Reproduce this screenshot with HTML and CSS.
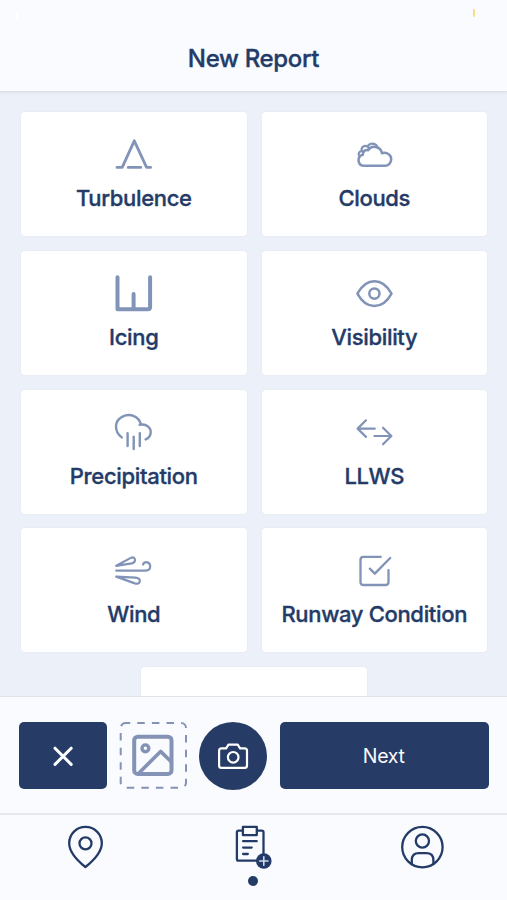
FILE: index.html
```html
<!DOCTYPE html>
<html lang="en">
<head>
<meta charset="utf-8">
<title>New Report</title>
<link rel="stylesheet" href="styles.css">
</head>
<body>
<div class="app">
  <header class="header">
    <div class="status"><i class="signal"></i><i class="battery"></i></div>
    <h1 class="title">New Report</h1>
  </header>
  <main class="content">
    <div class="grid">
      <button class="card"><svg class="icon" viewBox="114 134 40 40"><path d="M117 167.4h5.2L134.3 140.8 146.6 167.4h4M128.2 167.4h12.6" stroke-width="2.8"/></svg><span class="label">Turbulence</span></button>
      <button class="card"><svg class="icon" viewBox="354 134 40 40"><path d="M363.5 165.8A5.6 5.6 0 0 1 362.8 154.8C362.4 151.5 365.2 149.4 368 150.2C371.5 144.8 380.5 146.2 382 153.2C387.5 151.8 391.2 155.2 391.2 159.2C391.2 162.8 388.5 165.8 385 165.8Z"/><path d="M359.6 156.6C357.8 154.4 358.6 151.4 361.8 150.8C360.6 147.4 364.6 144.6 367.6 146.6C369.4 142.6 375.4 142.6 377.2 146.6M361.8 150.8l2.4 .8M367.6 146.6l1.8 2.2" stroke-width="2.2"/></svg><span class="label">Clouds</span></button>
      <button class="card"><svg class="icon" viewBox="114 273 40 40"><path d="M117.5 277.2v32h30.4q2.2 0 2.2-2.2v-29.8M133.6 294v15" stroke-width="4"/></svg><span class="label">Icing</span></button>
      <button class="card"><svg class="icon" viewBox="354 273 40 40"><path d="M357.4 293.6C361.5 286 367 281.2 374.4 281.2S387.4 286 391.5 293.6C387.4 301.2 381.8 306 374.4 306S361.5 301.2 357.4 293.6Z"/><circle cx="374.4" cy="293.6" r="5.1"/></svg><span class="label">Visibility</span></button>
      <button class="card"><svg class="icon" viewBox="114 412 40 40"><path d="M121.8 437.4C113.5 431 114.5 420.5 122.5 416.6C130.2 412.8 139 416.5 141 424.6C147 423.9 150.9 428 150.7 432.4C150.6 436 148.8 438.2 145.6 439.4M141 424.6l-1.3.3M127.6 433.2v12.8M133.7 436.6v12.4M139.8 433.2v12.8" stroke-width="2.4"/></svg><span class="label">Precipitation</span></button>
      <button class="card"><svg class="icon" viewBox="354 412 40 40"><path d="M374.8 428.6H357.8M366 420.3l-8.4 8.3 8.4 8.3M374.4 436H391.2M383 427.7l8.4 8.3-8.4 8.3" stroke-width="2.2"/></svg><span class="label">LLWS</span></button>
      <button class="card"><svg class="icon" viewBox="114 550.4 40 40"><path d="M116.2 566.2L130.8 558.3C133.4 557 135.2 558.6 135 560.8C134.8 562.7 133.4 563.4 131.7 563.8L116.2 566.2M116.2 571H145.5C148.6 571 150.2 569 150.2 566.7C150.2 562.2 144.5 561.2 143 565M116.2 577L135.4 578C138.6 578.2 140.2 579.8 139.8 581.6C139.4 584 137.2 584.5 134.8 583.8Z" stroke-width="2.2"/></svg><span class="label">Wind</span></button>
      <button class="card"><svg class="icon" viewBox="354 550.4 40 40"><path d="M380.8 557.2H363.5q-3 0-3 3v22.2q0 3 3 3h22q3 0 3-3V570.5M369.8 569l5 5 15.4-15.6" stroke-width="2.3"/></svg><span class="label">Runway Condition</span></button>
    </div>
    <div class="card next-card"></div>
  </main>
  <section class="actions">
    <button class="btn close" aria-label="Close"><svg width="24" height="24" viewBox="0 0 24 24"><path d="M4 4.2l16.2 16.2M20.2 4.2L4 20.4" stroke-width="3"/></svg></button>
    <button class="gallery" aria-label="Gallery">
      <svg width="68" height="68" viewBox="119 722 68 68"><rect x="120.7" y="723" width="65.3" height="64.8" rx="5" stroke-width="2" stroke-dasharray="7.5 7.1" stroke-dashoffset="3" stroke-linecap="butt"/><rect x="134.2" y="736.7" width="37.3" height="37.3" rx="3.6" stroke-width="4"/><circle cx="145.4" cy="748.3" r="3.4" stroke-width="3.4"/><path d="M139 773l21.6-21.6L171.5 762" stroke-width="3.6" stroke-linecap="butt"/></svg>
    </button>
    <button class="btn camera" aria-label="Camera"><svg width="34" height="30" viewBox="216 741 34 30"><path d="M221.5 748.4h4.6l2.4-3.8h9.2l2.4 3.8h4.5q2.4 0 2.4 2.4v14.7q0 2.4-2.4 2.4h-23.1q-2.4 0-2.4-2.4v-14.7q0-2.4 2.4-2.4Z"/><circle cx="233.2" cy="757.3" r="5.3"/></svg></button>
    <button class="btn next">Next</button>
  </section>
  <nav class="nav">
    <a class="tab"><svg width="44" height="48" viewBox="63 823 44 48"><path d="M85.4 867C76 859.5 69.2 851 69.2 843.2A16.3 16.3 0 0 1 101.8 843.2C101.8 851 94.8 859.5 85.4 867Z"/><circle cx="85.5" cy="843.4" r="6"/></svg></a>
    <a class="tab"><svg width="44" height="48" viewBox="231.4 823 44 48"><path d="M242.5 830.7H239q-1.7 0-1.7 1.7v26.5q0 1.7 1.7 1.7h23.2q1.7 0 1.7-1.7v-26.5q0-1.7-1.7-1.7h-4M243.3 826.9h13.9v8.2h-13.9ZM243.5 841.2h13.6M243.5 847.6h8.6M243.5 854h4.7"/><circle class="solid" cx="264.2" cy="861" r="7.8"/><path class="plus" d="M260 861h8.4M264.2 856.8v8.4"/></svg><i class="dot"></i></a>
    <a class="tab"><svg width="44" height="48" viewBox="399 823 44 48"><circle cx="422.4" cy="847.1" r="20.2"/><circle cx="422.4" cy="841" r="6.6"/><path d="M411.8 864v-3.8q0-7 7-7h7.6q7 0 7 7v3.8"/></svg></a>
  </nav>
</div>
</body>
</html>
```
FILE: styles.css
```css
* { box-sizing: border-box; }
body { margin: 0; font-family: Inter, "Liberation Sans", sans-serif; color: #243b67; }
button { font: inherit; color: inherit; border: 0; padding: 0; background: none; }
svg { display: block; fill: none; stroke-linecap: round; stroke-linejoin: round; flex: none; overflow: visible; }
.app { width: 507px; height: 900px; display: flex; flex-direction: column; overflow: hidden; background: #ecf0f8; }
.header { flex: 0 0 92px; background: #f9fbff; border-bottom: 1px solid #dde1e7; box-shadow: 0 1px 3px rgba(40, 60, 90, .08); }
.status { height: 33px; padding: 9px 32px 0 16px; display: flex; justify-content: space-between; }
.signal { width: 2px; height: 8px; margin-top: 2px; background: #fff; }
.battery { width: 2px; height: 8px; background: #f5df83; border-radius: 1px; }
.title, .label { font-weight: 500; letter-spacing: -.33px; -webkit-text-stroke: .35px currentColor; }
.title { margin: 0; text-align: center; font-size: 24px; line-height: 52px; }
.content { flex: 1; min-height: 0; overflow: hidden; padding: 20px 20px 0 21px; }
.grid { display: grid; grid-template-columns: 1fr 1fr; grid-auto-rows: 124px; gap: 14.8px 15px; }
.card { display: flex; flex-direction: column; align-items: center; padding-top: 22px; background: #fff; border-radius: 4px; box-shadow: 0 0 2px rgba(60, 80, 120, .08); }
.icon { width: 40px; height: 40px; stroke: #8194b7; stroke-width: 2.5; }
.label { margin-top: 9px; font-size: 22px; line-height: 30px; white-space: nowrap; }
.next-card { width: 226px; height: 124px; margin: 15px auto 0; }
.actions { flex: 0 0 117px; display: flex; align-items: flex-start; padding: 25px 18px 0 19px; background: #f9fbff; border-top: 1px solid #dfe3e9; }
.btn { display: flex; align-items: center; justify-content: center; height: 67px; color: #f9fbff; background: #263c66; border-radius: 5px; }
.btn svg { stroke: #fff; stroke-width: 2.2; }
.close { width: 88px; }
.gallery { margin-left: 12px; }
.gallery svg { stroke: #8493b5; }
.camera { width: 68px; height: 68px; margin-left: 12px; border-radius: 50%; }
.next { flex: 1; margin-left: 12.5px; padding-right: 1px; font-size: 19.5px; letter-spacing: -.3px; }
.nav { flex: 0 0 87px; display: grid; grid-template-columns: 170px 166px 170px; border-top: 2px solid #e6e9ef; background: #f9fbff; }
.tab { display: flex; flex-direction: column; align-items: center; padding-top: 8px; }
.tab svg { stroke: #243b67; stroke-width: 2.3; }
.tab .solid { fill: #243b67; stroke: none; }
.tab .plus { stroke: #cfdaea; stroke-width: 1.6; }
.dot { width: 10px; height: 10px; margin-top: 5px; border-radius: 50%; background: #243b67; }
```
